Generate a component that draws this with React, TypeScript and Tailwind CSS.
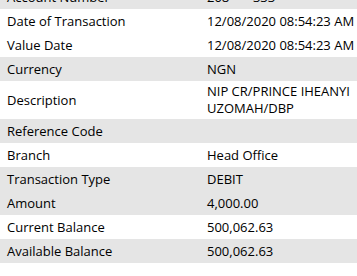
import React from "react";

type Row = { label: string; value: string; shade: boolean };

const rows: Row[] = [
  { label: "Account Number", value: "208 \u00a0\u00a0\u00a0\u00a0\u00a0 333", shade: true },
  { label: "Date of Transaction", value: "12/08/2020 08:54:23 AM", shade: false },
  { label: "Value Date", value: "12/08/2020 08:54:23 AM", shade: false },
  { label: "Currency", value: "NGN", shade: true },
  { label: "Description", value: "NIP CR/PRINCE IHEANYI UZOMAH/DBP", shade: false },
  { label: "Reference Code", value: "", shade: true },
  { label: "Branch", value: "Head Office", shade: false },
  { label: "Transaction Type", value: "DEBIT", shade: true },
  { label: "Amount", value: "4,000.00", shade: true },
  { label: "Current Balance", value: "500,062.63", shade: false },
  { label: "Available Balance", value: "500,062.63", shade: true },
];

const App = () => {
  return (
    <div className="h-[276px] w-[357px] overflow-hidden bg-white font-['Open_Sans',sans-serif] text-[13px] text-black">
      <div className="-mt-[15px] w-[420px]">
        {rows.map((r) => (
          <div
            key={r.label}
            className={`flex min-h-[24px] items-center py-[2px] leading-[17px] ${
              r.shade ? "bg-[#e5e5e5]" : "bg-white"
            }`}
          >
            <div className="w-[207px] shrink-0 pl-[7px]">{r.label}</div>
            <div
              className={
                r.label === "Description" ? "w-[150px]" : "whitespace-nowrap"
              }
            >
              {r.value}
            </div>
          </div>
        ))}
      </div>
    </div>
  );
};

export default App;
